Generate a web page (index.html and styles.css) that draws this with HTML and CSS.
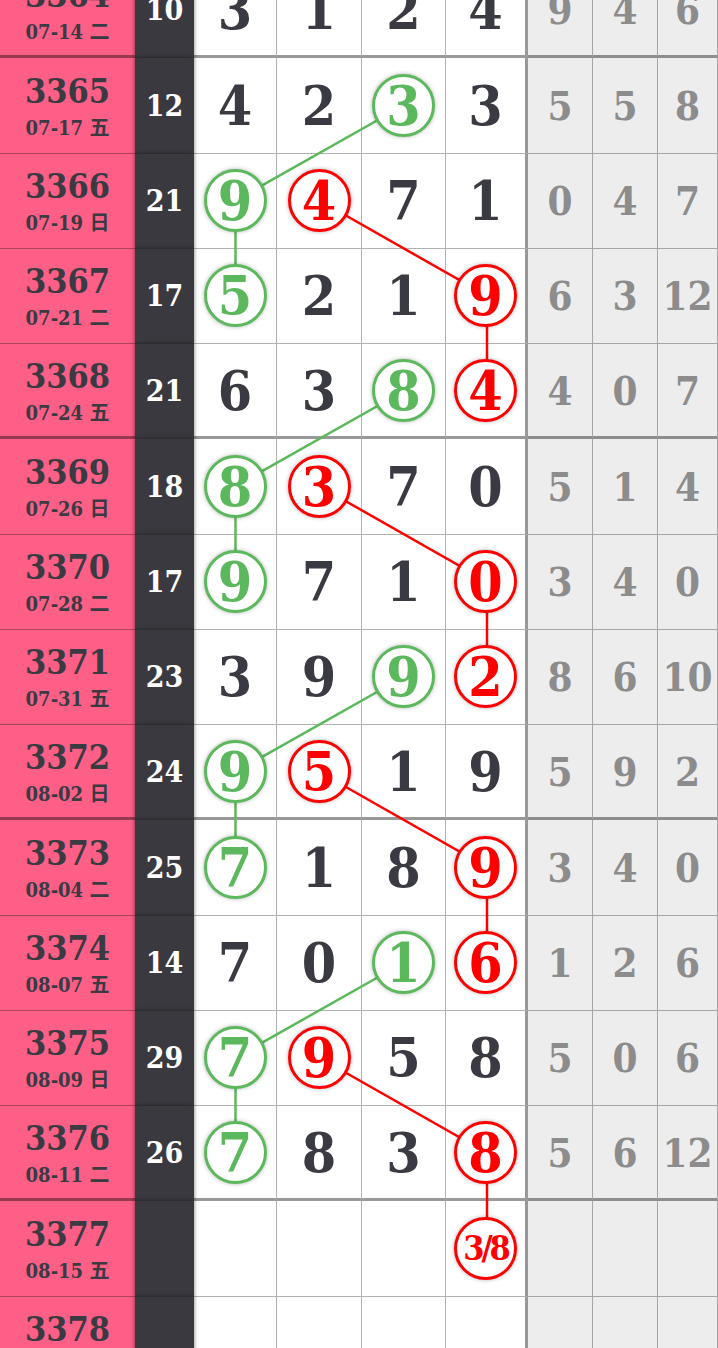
FILE: index.html
```html
<!DOCTYPE html>
<html lang="zh">
<head>
    <meta charset="UTF-8">
    <meta name="viewport" content="width=device-width, initial-scale=1.0">
    <title>走势图</title>
    <link rel="stylesheet" href="styles.css">
</head>
<body>
    <div class="board">
        <div class="row end">
            <div class="cell issue"><span class="no">3364</span><span class="date">07-14 二</span></div>
            <div class="cell sum">10</div>
            <div class="cell num">3</div>
            <div class="cell num">1</div>
            <div class="cell num">2</div>
            <div class="cell num last">4</div>
            <div class="cell dim">9</div>
            <div class="cell dim">4</div>
            <div class="cell dim">6</div>
        </div>
        <div class="row">
            <div class="cell issue"><span class="no">3365</span><span class="date">07-17 五</span></div>
            <div class="cell sum">12</div>
            <div class="cell num">4</div>
            <div class="cell num">2</div>
            <div class="cell num"><span class="ball g">3</span></div>
            <div class="cell num last">3</div>
            <div class="cell dim">5</div>
            <div class="cell dim">5</div>
            <div class="cell dim">8</div>
        </div>
        <div class="row">
            <div class="cell issue"><span class="no">3366</span><span class="date">07-19 日</span></div>
            <div class="cell sum">21</div>
            <div class="cell num"><span class="ball g">9</span></div>
            <div class="cell num"><span class="ball r">4</span></div>
            <div class="cell num">7</div>
            <div class="cell num last">1</div>
            <div class="cell dim">0</div>
            <div class="cell dim">4</div>
            <div class="cell dim">7</div>
        </div>
        <div class="row">
            <div class="cell issue"><span class="no">3367</span><span class="date">07-21 二</span></div>
            <div class="cell sum">17</div>
            <div class="cell num"><span class="ball g">5</span></div>
            <div class="cell num">2</div>
            <div class="cell num">1</div>
            <div class="cell num last"><span class="ball r">9</span></div>
            <div class="cell dim">6</div>
            <div class="cell dim">3</div>
            <div class="cell dim">12</div>
        </div>
        <div class="row end">
            <div class="cell issue"><span class="no">3368</span><span class="date">07-24 五</span></div>
            <div class="cell sum">21</div>
            <div class="cell num">6</div>
            <div class="cell num">3</div>
            <div class="cell num"><span class="ball g">8</span></div>
            <div class="cell num last"><span class="ball r">4</span></div>
            <div class="cell dim">4</div>
            <div class="cell dim">0</div>
            <div class="cell dim">7</div>
        </div>
        <div class="row">
            <div class="cell issue"><span class="no">3369</span><span class="date">07-26 日</span></div>
            <div class="cell sum">18</div>
            <div class="cell num"><span class="ball g">8</span></div>
            <div class="cell num"><span class="ball r">3</span></div>
            <div class="cell num">7</div>
            <div class="cell num last">0</div>
            <div class="cell dim">5</div>
            <div class="cell dim">1</div>
            <div class="cell dim">4</div>
        </div>
        <div class="row">
            <div class="cell issue"><span class="no">3370</span><span class="date">07-28 二</span></div>
            <div class="cell sum">17</div>
            <div class="cell num"><span class="ball g">9</span></div>
            <div class="cell num">7</div>
            <div class="cell num">1</div>
            <div class="cell num last"><span class="ball r">0</span></div>
            <div class="cell dim">3</div>
            <div class="cell dim">4</div>
            <div class="cell dim">0</div>
        </div>
        <div class="row">
            <div class="cell issue"><span class="no">3371</span><span class="date">07-31 五</span></div>
            <div class="cell sum">23</div>
            <div class="cell num">3</div>
            <div class="cell num">9</div>
            <div class="cell num"><span class="ball g">9</span></div>
            <div class="cell num last"><span class="ball r">2</span></div>
            <div class="cell dim">8</div>
            <div class="cell dim">6</div>
            <div class="cell dim">10</div>
        </div>
        <div class="row end">
            <div class="cell issue"><span class="no">3372</span><span class="date">08-02 日</span></div>
            <div class="cell sum">24</div>
            <div class="cell num"><span class="ball g">9</span></div>
            <div class="cell num"><span class="ball r">5</span></div>
            <div class="cell num">1</div>
            <div class="cell num last">9</div>
            <div class="cell dim">5</div>
            <div class="cell dim">9</div>
            <div class="cell dim">2</div>
        </div>
        <div class="row">
            <div class="cell issue"><span class="no">3373</span><span class="date">08-04 二</span></div>
            <div class="cell sum">25</div>
            <div class="cell num"><span class="ball g">7</span></div>
            <div class="cell num">1</div>
            <div class="cell num">8</div>
            <div class="cell num last"><span class="ball r">9</span></div>
            <div class="cell dim">3</div>
            <div class="cell dim">4</div>
            <div class="cell dim">0</div>
        </div>
        <div class="row">
            <div class="cell issue"><span class="no">3374</span><span class="date">08-07 五</span></div>
            <div class="cell sum">14</div>
            <div class="cell num">7</div>
            <div class="cell num">0</div>
            <div class="cell num"><span class="ball g">1</span></div>
            <div class="cell num last"><span class="ball r">6</span></div>
            <div class="cell dim">1</div>
            <div class="cell dim">2</div>
            <div class="cell dim">6</div>
        </div>
        <div class="row">
            <div class="cell issue"><span class="no">3375</span><span class="date">08-09 日</span></div>
            <div class="cell sum">29</div>
            <div class="cell num"><span class="ball g">7</span></div>
            <div class="cell num"><span class="ball r">9</span></div>
            <div class="cell num">5</div>
            <div class="cell num last">8</div>
            <div class="cell dim">5</div>
            <div class="cell dim">0</div>
            <div class="cell dim">6</div>
        </div>
        <div class="row end">
            <div class="cell issue"><span class="no">3376</span><span class="date">08-11 二</span></div>
            <div class="cell sum">26</div>
            <div class="cell num"><span class="ball g">7</span></div>
            <div class="cell num">8</div>
            <div class="cell num">3</div>
            <div class="cell num last"><span class="ball r">8</span></div>
            <div class="cell dim">5</div>
            <div class="cell dim">6</div>
            <div class="cell dim">12</div>
        </div>
        <div class="row">
            <div class="cell issue"><span class="no">3377</span><span class="date">08-15 五</span></div>
            <div class="cell sum"></div>
            <div class="cell num"></div>
            <div class="cell num"></div>
            <div class="cell num"></div>
            <div class="cell num last"><span class="ball r guess">3/8</span></div>
            <div class="cell dim"></div>
            <div class="cell dim"></div>
            <div class="cell dim"></div>
        </div>
        <div class="row">
            <div class="cell issue"><span class="no">3378</span><span class="date">08-18 日</span></div>
            <div class="cell sum"></div>
            <div class="cell num"></div>
            <div class="cell num"></div>
            <div class="cell num"></div>
            <div class="cell num last"></div>
            <div class="cell dim"></div>
            <div class="cell dim"></div>
            <div class="cell dim"></div>
        </div>

        <!-- trend lines, drawn under the balls -->
        <svg class="links" width="718" height="1430" viewBox="0 0 718 1430">
            <g class="green">
                <polyline points="404,142.25 235.5,237.5 235.5,332.75"/>
                <polyline points="404,428 235.5,523.25 235.5,618.5"/>
                <polyline points="404,713.75 235.5,809 235.5,904.25"/>
                <polyline points="404,999.5 235.5,1094.75 235.5,1190"/>
            </g>
            <g class="red">
                <polyline points="319.5,237.5 487,332.75 487,428"/>
                <polyline points="319.5,523.25 487,618.5 487,713.75"/>
                <polyline points="319.5,809 487,904.25 487,999.5"/>
                <polyline points="319.5,1094.75 487,1190 487,1285.25"/>
            </g>
        </svg>
    </div>
</body>
</html>
```

FILE: styles.css
```css
body {
    margin: 0;
    background: #fff;
    overflow: hidden;
    font-family: "DejaVu Serif Condensed", "DejaVu Serif", "Noto Sans CJK SC", serif;
    font-stretch: condensed;
    font-weight: bold;
    color: #3a3a42;
}

.board {
    position: relative;
    margin-top: -37px;
}

.row {
    display: grid;
    grid-template-columns: 135px 59px 83px 85px 84px 82px 65px 65px 60px;
    height: 95.25px;
}

.cell {
    box-sizing: border-box;
    display: flex;
    align-items: center;
    justify-content: center;
    border-bottom: 1px solid rgba(0, 0, 0, 0.3);
    border-right: 1px solid rgba(0, 0, 0, 0.3);
}

.row.end .cell {
    border-bottom: 3px solid rgba(0, 0, 0, 0.4);
}

.issue {
    flex-direction: column;
    background: #fe5f86;
    border-right: none;
}

.issue .no {
    font-size: 34px;
    line-height: 40px;
}

.issue .date {
    font-size: 20px;
    line-height: 24px;
    margin-top: 5px;
}

.sum {
    position: relative;
    z-index: 1;
    background: #3a393f;
    color: #fff;
    font-size: 30px;
    border-right: none;
    border-bottom-color: #3a393f !important;
    box-shadow: 0 0 4px rgba(0, 0, 0, 0.55);
}

.num {
    background: #fff;
    font-size: 55px;
    line-height: 1;
}

.num.last {
    border-right: 3px solid rgba(0, 0, 0, 0.4);
}

.dim {
    background: #ededed;
    color: #8c8c8c;
    font-size: 40px;
}

.ball {
    position: relative;
    z-index: 2;
    box-sizing: border-box;
    width: 63px;
    height: 63px;
    border-radius: 50%;
    border: 3px solid;
    background: #fff;
    display: flex;
    align-items: center;
    justify-content: center;
    line-height: 1;
    box-shadow: 0 0 4px rgba(0, 0, 0, 0.3);
}

.ball.g {
    color: #5cb85c;
    border-color: #5cb85c;
}

.ball.r {
    color: #ff0000;
    border-color: #ff0000;
}

.ball.guess {
    font-size: 34px;
    letter-spacing: -3px;
}

.links {
    position: absolute;
    top: 0;
    left: 0;
    z-index: 1;
    pointer-events: none;
}

.links polyline {
    fill: none;
    stroke-width: 2.5;
}

.links .green polyline {
    stroke: #5cb85c;
}

.links .red polyline {
    stroke: #ff0000;
}
```
